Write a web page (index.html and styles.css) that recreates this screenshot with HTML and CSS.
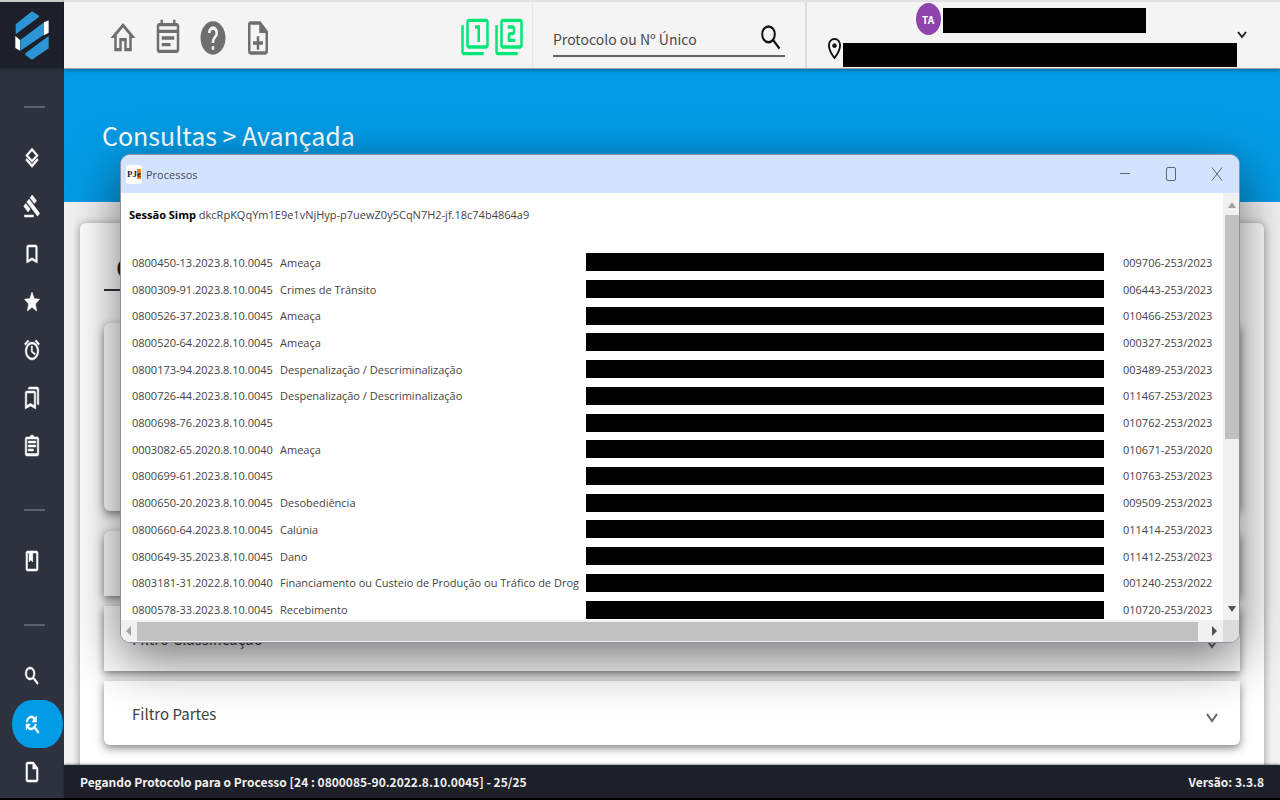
FILE: index.html
```html
<!DOCTYPE html>
<html lang="pt-BR">
<head>
<meta charset="utf-8">
<title>Consultas - Avançada</title>
<link rel="stylesheet" href="styles.css">
</head>
<body>
<div class="app">
  <nav class="sidebar" aria-label="Menu principal">
    <a class="logo" href="#" aria-label="Início">
      <svg viewBox="45 32 102 147" width="34" height="49">
        <path fill="#2b95d6" d="M47 72 96 33 117 46v4L47 102zM61 119 132 66v37L61 151zM76 159 146 107v37L96 178 76 164z"/>
        <path fill="#fff" d="M132 66 146 60v37l-14 8zM46 107l14 12v32l-14-8z"/>
      </svg>
    </a>
    <hr class="side-rule">
    <a class="side-item" href="#" aria-label="Camadas"><svg class="side-icon" viewBox="0 0 24 24" preserveAspectRatio="none"><path d="M12 18.500 5.200 12.600 3.500 14 12 21.500 20.500 14 18.800 12.600zM12 16.500l8.500-7L12 2 3.500 9.500zM12 4.800l5.300 4.700L12 13.800 6.700 9.500z"/></svg></a>
    <a class="side-item" href="#" aria-label="Julgamentos"><svg class="side-icon" viewBox="0 0 24 24" preserveAspectRatio="none"><path d="M2 21h12v2H2zM5.200 8.100l2.900-2.900 14.100 14.100-2.800 2.900zM12.300 1l5.700 5.700-2.900 2.800-5.600-5.700zM3.800 9.500l5.700 5.600-2.800 2.900L1 12.300z"/></svg></a>
    <a class="side-item" href="#" aria-label="Marcador"><svg class="side-icon" viewBox="0 0 24 24" preserveAspectRatio="none"><path d="M17 3H7c-1.100 0-2 .9-2 2v16l7-3 7 3V5c0-1.100-.9-2-2-2zm0 15-5-2.200L7 18V5h10z"/></svg></a>
    <a class="side-item" href="#" aria-label="Favoritos"><svg class="side-icon" viewBox="0 0 24 24" preserveAspectRatio="none"><path d="M12 17.300 18.200 21l-1.600-7L22 9.200l-7.200-.6L12 2 9.200 8.600 2 9.200 7.500 14l-1.700 7z"/></svg></a>
    <a class="side-item" href="#" aria-label="Prazos"><svg class="side-icon" viewBox="0 0 24 24" preserveAspectRatio="none"><path d="M22 5.700l-4.600-3.900-1.300 1.500 4.600 3.900zM7.900 3.400 6.600 1.900 2 5.700l1.300 1.500zM12.500 8H11v6l4.800 2.900.7-1.300-4-2.300zM12 4a9 9 0 1 0 0 18 9 9 0 0 0 0-18zm0 16a7 7 0 1 1 0-14 7 7 0 0 1 0 14z"/></svg></a>
    <a class="side-item" href="#" aria-label="Marcadores"><svg class="side-icon" viewBox="0 0 24 24" preserveAspectRatio="none"><path d="M15 7v12.500l-4-1.700-1-.4-1 .4-4 1.700V7h10m4-6H9C7.900 1 7 1.900 7 3h10c1.100 0 2 .9 2 2v13l2 1V3c0-1.100-.9-2-2-2zm-4 4H5c-1.100 0-2 .9-2 2v16l7-3 7 3V7c0-1.100-.9-2-2-2z"/></svg></a>
    <a class="side-item" href="#" aria-label="Tarefas"><svg class="side-icon" viewBox="0 0 24 24" preserveAspectRatio="none"><path d="M7 15h7v2H7zm0-4h10v2H7zm0-4h10v2H7zm12-4h-4.200a3 3 0 0 0-5.600 0H5a2 2 0 0 0-2 2v15c0 1.100.9 2 2 2h14c1.100 0 2-.9 2-2V5c0-1.100-.9-2-2-2zm0 16.500H5V5h14z"/></svg></a>
    <hr class="side-rule">
    <a class="side-item" href="#" aria-label="Diário"><svg class="side-icon" viewBox="0 0 24 24" preserveAspectRatio="none"><path d="M18 2H6c-1.100 0-2 .9-2 2v16c0 1.100.9 2 2 2h12c1.100 0 2-.9 2-2V4c0-1.100-.9-2-2-2zm0 18H6V4h2v9l2.500-2 2.500 2V4h5z"/></svg></a>
    <hr class="side-rule">
    <a class="side-item" href="#" aria-label="Consulta simples"><svg class="side-icon" viewBox="0 0 24 24" preserveAspectRatio="none"><path d="M15.500 14h-.8l-.3-.3a6.500 6.500 0 1 0-.7.700l.3.300v.8l5 5 1.500-1.500zm-6 0a4.500 4.500 0 1 1 0-9 4.500 4.500 0 0 1 0 9z"/></svg></a>
    <a class="side-item side-item-active" href="#" aria-label="Consulta avançada"><svg class="side-icon" viewBox="0 0 24 24" preserveAspectRatio="none"><path d="M11 6c1.400 0 2.600.6 3.500 1.500L12 10h6V4l-2 2a7 7 0 0 0-11.900 4h2A5 5 0 0 1 11 6zm5.600 9.100a6.900 6.900 0 0 0 1.300-3.100h-2A5 5 0 0 1 7.500 14.500L10 12H4v6l2-2a7 7 0 0 0 9.200.6L20 21.500 21.500 20z"/></svg></a>
    <a class="side-item" href="#" aria-label="Documentos"><svg class="side-icon" viewBox="0 0 24 24" preserveAspectRatio="none"><path d="M14 2H6c-1.100 0-2 .9-2 2v16c0 1.100.9 2 2 2h12c1.100 0 2-.9 2-2V8zM6 20V4h7v5h5v11z"/></svg></a>
  </nav>

  <div class="workspace">
    <header class="topbar">
      <div class="shortcuts">
        <button class="icon-button" aria-label="Página inicial"><svg class="top-icon" viewBox="0 0 24 24" preserveAspectRatio="none"><path d="M12 5.700l5 4.500V18h-2v-6H9v6H7v-7.800zM12 3 2 12h3v8h6v-6h2v6h6v-8h3z"/></svg></button>
        <button class="icon-button" aria-label="Agenda"><svg class="top-icon" viewBox="0 0 24 24" preserveAspectRatio="none"><path d="M19 3h-1V1h-2v2H8V1H6v2H5c-1.100 0-2 .9-2 2v14c0 1.100.9 2 2 2h14c1.100 0 2-.9 2-2V5c0-1.100-.9-2-2-2zm0 16H5V9h14zm0-12H5V5h14zM7 11h10v2H7zm0 4h7v2H7z"/></svg></button>
        <button class="icon-button" aria-label="Ajuda"><svg class="top-icon" viewBox="0 0 24 24" preserveAspectRatio="none"><path d="M12 2C6.480 2 2 6.480 2 12s4.480 10 10 10 10-4.480 10-10S17.520 2 12 2zm1 17h-2v-2h2v2zm2.070-7.750-.9.920C13.450 12.900 13 13.500 13 15h-2v-.5c0-1.100.45-2.100 1.170-2.830l1.240-1.260c.37-.36.59-.86.59-1.410 0-1.100-.9-2-2-2s-2 .9-2 2H8c0-2.210 1.790-4 4-4s4 1.790 4 4c0 .88-.36 1.680-.93 2.250z"/></svg></button>
        <button class="icon-button" aria-label="Novo documento"><svg class="top-icon" viewBox="0 0 24 24" preserveAspectRatio="none"><path d="M14 2H6c-1.100 0-2 .9-2 2v16c0 1.100.9 2 2 2h12c1.100 0 2-.9 2-2V8zM6 20V4h7v5h5v11zM11 11h2v3h3v2h-3v3h-2v-3H8v-2h3z"/></svg></button>
      </div>
      <div class="instances">
        <button class="icon-button" aria-label="1º grau"><svg class="top-icon top-icon-green" viewBox="0 0 24 24" preserveAspectRatio="none"><path d="M3 5H1v16c0 1.100.9 2 2 2h16v-2H3zm11 10h2V5h-4v2h2zm7-14H7c-1.100 0-2 .9-2 2v14c0 1.100.9 2 2 2h14c1.100 0 2-.9 2-2V3c0-1.100-.9-2-2-2zm0 16H7V3h14z"/></svg></button>
        <button class="icon-button" aria-label="2º grau"><svg class="top-icon top-icon-green" viewBox="0 0 24 24" preserveAspectRatio="none"><path d="M3 5H1v16c0 1.100.9 2 2 2h16v-2H3zm18-4H7c-1.100 0-2 .9-2 2v14c0 1.100.9 2 2 2h14c1.100 0 2-.9 2-2V3c0-1.100-.9-2-2-2zm0 16H7V3h14zm-4-4h-4v-2h2c1.100 0 2-.9 2-2V7c0-1.100-.9-2-2-2h-4v2h4v2h-2c-1.100 0-2 .9-2 2v4h6z"/></svg></button>
      </div>
      <form class="search">
        <div class="search-field">
          <input class="search-input" type="text" placeholder="Protocolo ou Nº Único" aria-label="Protocolo ou Nº Único">
          <button class="icon-button" type="button" aria-label="Pesquisar"><svg class="search-icon" viewBox="0 0 24 24" preserveAspectRatio="none"><circle cx="9.500" cy="9" r="6.300"/><path d="M14 13.500 20.500 20.500"/></svg></button>
        </div>
      </form>
      <div class="user">
        <div class="user-info">
          <div class="user-line"><span class="avatar">TA</span><span class="redacted redacted-name"></span></div>
          <div class="user-line">
            <svg class="pin" viewBox="5 1 14 22" preserveAspectRatio="none"><path d="M12 2C8.500 2 6 5 6 9c0 5 6 13 6 13s6-8 6-13c0-4-2.500-7-6-7z"/><circle cx="12" cy="9" r="2"/></svg>
            <span class="redacted redacted-place"></span>
          </div>
        </div>
        <button class="icon-button" aria-label="Abrir menu do usuário"><svg class="caret" viewBox="0 0 10 8"><path d="M1 1l4 5 4-5"/></svg></button>
      </div>
    </header>

    <main class="page">
      <div class="banner"><h1 class="banner-title">Consultas &gt; Avançada</h1></div>
      <section class="card">
        <h2 class="card-title">C</h2>
        <div class="panel panel-form"></div>
        <div class="panel panel-gap"></div>
        <button class="panel panel-row panel-flat">Filtro Classificação <svg class="chevron" viewBox="0 0 12 10"><path d="M1 1l5 7 5-7"/></svg></button>
        <button class="panel panel-row">Filtro Partes <svg class="chevron" viewBox="0 0 12 10"><path d="M1 1l5 7 5-7"/></svg></button>
      </section>
    </main>

    <footer class="statusbar">
      <span>Pegando Protocolo para o Processo [24 : 0800085-90.2022.8.10.0045] - 25/25</span>
      <span>Versão: 3.3.8</span>
    </footer>
  </div>

  <section class="window" role="dialog" aria-label="Processos">
    <header class="window-bar">
      <span class="window-icon">PJ<b class="window-icon-e">e</b></span>
      <span class="window-title">Processos</span>
      <button class="window-button" aria-label="Minimizar"><svg class="window-glyph" viewBox="0 0 12 16"><path d="M1 7.500h10"/></svg></button>
      <button class="window-button" aria-label="Maximizar"><svg class="window-glyph" viewBox="0 0 12 16"><rect x="1.500" y="1.500" width="9" height="13" rx="1.500"/></svg></button>
      <button class="window-button" aria-label="Fechar"><svg class="window-glyph" viewBox="0 0 12 16"><path d="M1 1.500l10 13M11 1.500l-10 13"/></svg></button>
    </header>
    <div class="window-body">
      <div class="window-content">
        <p class="session"><b>Sessão Simp</b> dkcRpKQqYm1E9e1vNjHyp-p7uewZ0y5CqN7H2-jf.18c74b4864a9</p>
        <table class="cases">
          <colgroup><col class="col-number"><col class="col-subject"><col><col class="col-protocol"></colgroup>
          <tbody>
            <tr><td>0800450-13.2023.8.10.0045</td><td>Ameaça</td><td><div class="redacted redacted-row"></div></td><td>009706-253/2023</td></tr>
            <tr><td>0800309-91.2023.8.10.0045</td><td>Crimes de Trânsito</td><td><div class="redacted redacted-row"></div></td><td>006443-253/2023</td></tr>
            <tr><td>0800526-37.2023.8.10.0045</td><td>Ameaça</td><td><div class="redacted redacted-row"></div></td><td>010466-253/2023</td></tr>
            <tr><td>0800520-64.2022.8.10.0045</td><td>Ameaça</td><td><div class="redacted redacted-row"></div></td><td>000327-253/2023</td></tr>
            <tr><td>0800173-94.2023.8.10.0045</td><td>Despenalização / Descriminalização</td><td><div class="redacted redacted-row"></div></td><td>003489-253/2023</td></tr>
            <tr><td>0800726-44.2023.8.10.0045</td><td>Despenalização / Descriminalização</td><td><div class="redacted redacted-row"></div></td><td>011467-253/2023</td></tr>
            <tr><td>0800698-76.2023.8.10.0045</td><td></td><td><div class="redacted redacted-row"></div></td><td>010762-253/2023</td></tr>
            <tr><td>0003082-65.2020.8.10.0040</td><td>Ameaça</td><td><div class="redacted redacted-row"></div></td><td>010671-253/2020</td></tr>
            <tr><td>0800699-61.2023.8.10.0045</td><td></td><td><div class="redacted redacted-row"></div></td><td>010763-253/2023</td></tr>
            <tr><td>0800650-20.2023.8.10.0045</td><td>Desobediência</td><td><div class="redacted redacted-row"></div></td><td>009509-253/2023</td></tr>
            <tr><td>0800660-64.2023.8.10.0045</td><td>Calúnia</td><td><div class="redacted redacted-row"></div></td><td>011414-253/2023</td></tr>
            <tr><td>0800649-35.2023.8.10.0045</td><td>Dano</td><td><div class="redacted redacted-row"></div></td><td>011412-253/2023</td></tr>
            <tr><td>0803181-31.2022.8.10.0040</td><td>Financiamento ou Custeio de Produção ou Tráfico de Drog</td><td><div class="redacted redacted-row"></div></td><td>001240-253/2022</td></tr>
            <tr><td>0800578-33.2023.8.10.0045</td><td>Recebimento</td><td><div class="redacted redacted-row"></div></td><td>010720-253/2023</td></tr>
          </tbody>
        </table>
      </div>
      <div class="scroll-y">
        <svg class="arrow arrow-off" viewBox="0 0 8 6"><path d="M0 6l4-6 4 6z"/></svg>
        <div class="thumb-y"></div>
        <svg class="arrow arrow-down" viewBox="0 0 8 6"><path d="M0 0l4 6 4-6z"/></svg>
      </div>
      <div class="scroll-x">
        <svg class="arrow-side arrow-off" viewBox="0 0 5 10"><path d="M5 0L0 5l5 5z"/></svg>
        <div class="thumb-x"></div>
        <svg class="arrow-side" viewBox="0 0 5 10"><path d="M0 0l5 5-5 5z"/></svg>
      </div>
      <div class="scroll-corner"></div>
    </div>
  </section>
</div>
</body>
</html>
```
FILE: styles.css
```css
* { box-sizing: border-box; }

body {
  margin: 0;
  background: #000;
  color: #222;
  font-family: "Noto Sans CJK SC", "Open Sans", sans-serif;
  font-size: 12px;
}

button {
  border: 0;
  padding: 0;
  background: none;
  color: inherit;
  font: inherit;
  cursor: pointer;
}

.app {
  position: relative;
  display: grid;
  grid-template-columns: 64px minmax(0, 1fr);
  height: 100vh;
  padding-bottom: 2px;
  overflow: hidden;
}

/* Sidebar */
.sidebar {
  display: flex;
  flex-direction: column;
  background: #2e323f;
}

.logo {
  display: flex;
  flex: none;
  align-items: center;
  justify-content: center;
  height: 68px;
  border-top: 2px solid #ccc;
  background: #1e2029;
  box-shadow: 0 1px 4px #1e2029;
}

.side-rule {
  width: 21px;
  height: 2px;
  margin: 38px 0 26px 24px;
  border: 0;
  background: #5c606b;
}

.side-rule ~ .side-rule { margin-top: 39px; }

.side-item {
  display: flex;
  flex: none;
  align-items: center;
  height: 48px;
  margin-left: 12px;
  padding-left: 11px;
  border-radius: 20px / 24px;
}

.side-item-active { background: #039be5; margin-right: 1px; }
.side-icon { width: 18px; height: 24px; fill: #fff; stroke: #fff; stroke-width: .6; }

/* Top bar */
.workspace {
  display: flex;
  flex-direction: column;
  min-width: 0;
  min-height: 0;
}

.topbar {
  position: relative;
  display: flex;
  flex: none;
  height: 69px;
  border-top: 2px solid #e2e2e2;
  border-bottom: 1px solid #9aa0a8;
  background: #f4f4f4;
  box-shadow: 0 1px 3px rgba(0, 0, 0, .4);
}

.icon-button { display: flex; }
.shortcuts { display: flex; flex: 1; align-items: center; gap: 15px; padding: 6px 0 0 44px; }
.instances { display: flex; align-items: center; gap: 4px; padding: 4px 8px 0 0; }
.top-icon { width: 30px; height: 40px; fill: #6e6e6e; }
.top-icon-green { fill: #00e676; }

.search {
  width: 275px;
  padding: 19px 20px 0;
  border-left: 1px solid #e6e6e6;
  border-right: 2px solid #dcdcdc;
}

.search-field {
  display: flex;
  align-items: center;
  height: 36px;
  border-bottom: 2px solid #666;
}

.search-input {
  flex: 1;
  min-width: 0;
  height: 33px;
  padding: 2px 0 0;
  border: 0;
  outline: 0;
  background: none;
  font: 14px "Noto Sans CJK SC", "Open Sans", sans-serif;
}

.search-input::placeholder { color: #4a4a4a; opacity: 1; }
.search-icon { width: 24px; height: 30px; margin-right: 2px; fill: none; stroke: #111; stroke-width: 2; }

.user { display: flex; align-items: center; width: 473px; padding: 0 33px 0 21px; }
.user-info { display: flex; flex: 1; flex-direction: column; align-items: center; align-self: flex-start; gap: 3px; padding-top: 1px; }
.user-line { display: flex; align-items: center; gap: 2px; }

.avatar {
  display: flex;
  align-items: center;
  justify-content: center;
  width: 25px;
  height: 32px;
  border-radius: 50%;
  background: #8e44ad;
  color: #fff;
  font-size: 10px;
  font-weight: bold;
}

.redacted { background: #000; }
.redacted-name { width: 203px; height: 25px; margin: 3px 4px 0 0; }
.redacted-place { width: 394px; height: 24px; }
.pin { width: 13px; height: 21px; margin-bottom: 12px; fill: none; stroke: #111; stroke-width: 2; }
.pin circle { fill: #111; stroke-width: 1; }
.caret { width: 10px; height: 8px; fill: none; stroke: #222; stroke-width: 2; }

/* Page behind the dialog */
.page {
  flex: 1;
  min-height: 0;
  overflow: hidden;
  background: #f2f2f2;
}

.banner { height: 133px; padding: 49px 38px 0; background: #039be5; }
.banner-title { margin: 0; color: #fff; font-size: 25px; font-weight: normal; line-height: 34px; }

.card {
  display: flex;
  flex-direction: column;
  margin: 21px 16px 0;
  padding: 27px 24px 32px;
  border-radius: 6px;
  background: #fff;
  box-shadow: 0 1px 8px rgba(0, 0, 0, .4);
}

.card-title {
  height: 41px;
  margin: 0 0 32px;
  padding-left: 12px;
  border-bottom: 2px solid #2e323f;
  font-size: 26px;
  font-weight: normal;
  line-height: 34px;
}

.panel {
  border-radius: 6px;
  background: #fff;
  box-shadow: 0 3px 8px rgba(0, 0, 0, .5);
}

.panel-form { height: 188px; margin-bottom: 20px; }
.panel-gap { height: 65px; margin-bottom: 10px; border-radius: 6px 6px 0 0; }

.panel-row {
  display: flex;
  align-items: center;
  justify-content: space-between;
  height: 64px;
  padding: 0 22px 0 28px;
  border-radius: 0 0 6px 6px;
  color: #444;
  font-size: 15px;
}

.panel-flat { height: 65px; margin-bottom: 10px; border-radius: 0; }
.chevron { width: 12px; height: 10px; margin-top: 10px; fill: none; stroke: #666; stroke-width: 2; }

.statusbar {
  position: relative;
  display: flex;
  flex: none;
  align-items: center;
  justify-content: space-between;
  height: 33px;
  padding: 0 16px;
  background: #1e2029;
  box-shadow: 0 -1px 2px rgba(0, 0, 0, .4);
  color: #f0f0f0;
  font-size: 12px;
  font-weight: bold;
}

/* Floating dialog */
.window {
  position: absolute;
  top: 154px;
  right: 40px;
  left: 120px;
  overflow: hidden;
  border: 1px solid #8a939e;
  border-radius: 10px;
  background: #fff;
  box-shadow: 0 16px 52px rgba(0, 0, 0, .55);
  font-family: "Open Sans", sans-serif;
  font-size: 11px;
}

.window-bar { display: flex; align-items: center; height: 38px; padding: 0 5px; background: #d3e3fd; }

.window-icon {
  display: flex;
  align-items: center;
  justify-content: center;
  width: 16px;
  height: 19px;
  border-radius: 3px;
  background: #fff;
  color: #222244;
  font: bold 9px "Liberation Serif", serif;
}

.window-icon-e { background: #f58220; color: #222; }
.window-title { flex: 1; padding-left: 4px; color: #454a54; }
.window-button { display: flex; align-items: center; justify-content: center; width: 46px; height: 38px; }
.window-button:last-child { width: 34px; margin-left: 6px; }
.window-glyph { width: 12px; height: 16px; fill: none; stroke: #5f6670; }

.window-body {
  display: grid;
  grid-template-columns: minmax(0, 1fr) 16px;
  grid-template-rows: 427px 22px;
}

.window-content { padding: 11px 0 0 8px; overflow: hidden; color: #444; }
.session { margin: 0 0 23px; line-height: 22px; }
.session b { color: #000; }

.cases { width: 100%; height: 374px; border-collapse: collapse; table-layout: fixed; font-size: inherit; }
.cases td { padding: 0; overflow: hidden; white-space: nowrap; }
.cases td:first-child { padding-left: 3px; }
.cases td:last-child { padding-left: 19px; }
.col-number { width: 151px; }
.col-subject { width: 306px; }
.col-protocol { width: 119px; }
.redacted-row { height: 18px; }

.scroll-y { display: flex; flex-direction: column; align-items: center; padding: 9px 0 8px 1px; background: #f1f1f1; }
.arrow { width: 8px; height: 6px; fill: #505050; }
.arrow-side { width: 5px; height: 10px; fill: #505050; }
.arrow-off { fill: #a3a3a3; }
.thumb-y { width: 14px; height: 224px; margin-top: 7px; background: #c1c1c1; }
.arrow-down { margin-top: auto; }
.scroll-x { display: flex; align-items: center; gap: 6px; padding: 1px 6px 1px 5px; background: #f1f1f1; }
.thumb-x { flex: 1; height: 19px; margin-right: 8px; background: #c1c1c1; }
.scroll-corner { background: #dcdcdc; }
```
